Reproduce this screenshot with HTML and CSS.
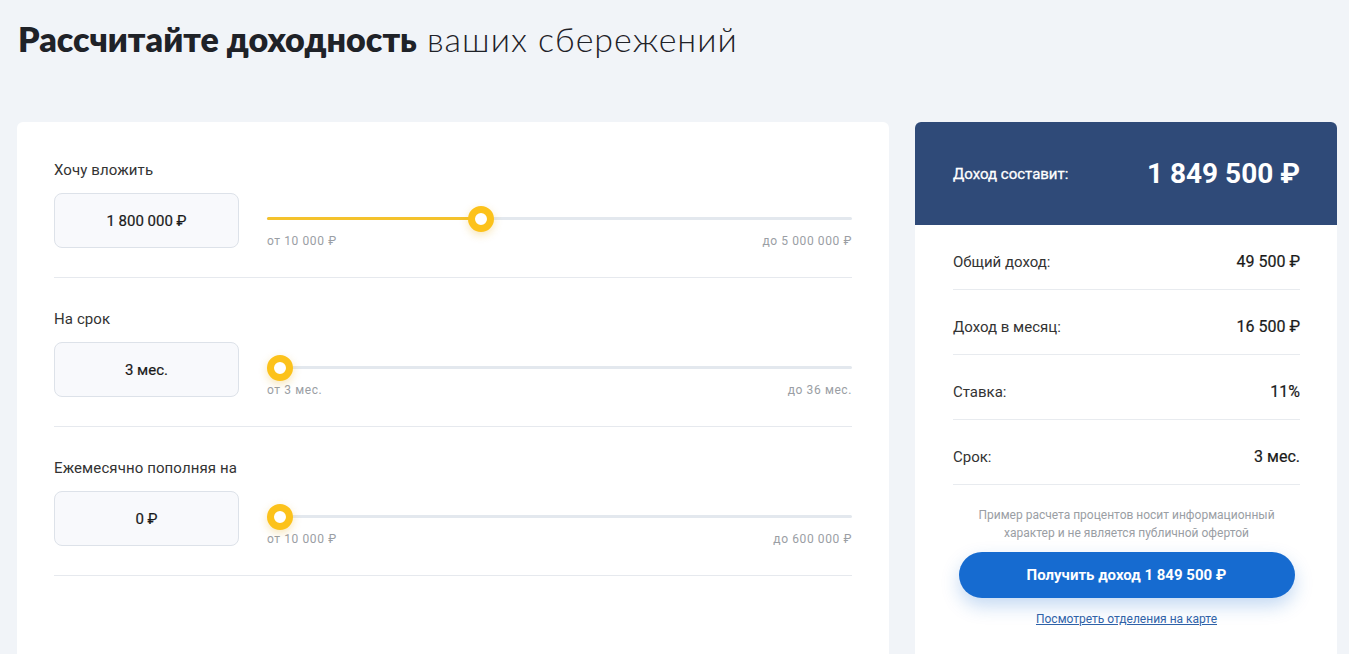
FILE: index.html
```html
<!doctype html>
<html lang="ru">
<head>
	<meta charset="UTF-8">
	<meta name="viewport" content="width=device-width, initial-scale=1.0">
	<title>Калькулятор доходности</title>
	<link rel="stylesheet" href="styles.css">
</head>
<body>
<div class="page">
	<h1 class="title"><b>Рассчитайте доходность</b> ваших сбережений</h1>
	<div class="layout">
		<div class="calc">
			<div class="field">
				<p class="field-name">Хочу вложить</p>
				<div class="field-row">
					<div class="value">1 800 000 ₽</div>
					<div class="range">
						<div class="track">
							<div class="fill" style="width: 36.6%"></div>
							<div class="thumb" style="left: calc(35.87% - 9.3px)"></div>
						</div>
						<div class="limits"><span>от 10 000 ₽</span><span>до 5 000 000 ₽</span></div>
					</div>
				</div>
			</div>
			<div class="field">
				<p class="field-name">На срок</p>
				<div class="field-row">
					<div class="value">3 мес.</div>
					<div class="range">
						<div class="track">
							<div class="thumb" style="left: 0"></div>
						</div>
						<div class="limits"><span>от 3 мес.</span><span>до 36 мес.</span></div>
					</div>
				</div>
			</div>
			<div class="field">
				<p class="field-name">Ежемесячно пополняя на</p>
				<div class="field-row">
					<div class="value">0 ₽</div>
					<div class="range">
						<div class="track">
							<div class="thumb" style="left: 0"></div>
						</div>
						<div class="limits"><span>от 10 000 ₽</span><span>до 600 000 ₽</span></div>
					</div>
				</div>
			</div>
		</div>
		<div class="result">
			<div class="result-head">
				<span class="result-label">Доход составит:</span>
				<span class="result-sum">1 849 500 ₽</span>
			</div>
			<div class="result-body">
				<div class="line"><span>Общий доход:</span><b>49 500 ₽</b></div>
				<div class="line"><span>Доход в месяц:</span><b>16 500 ₽</b></div>
				<div class="line"><span>Ставка:</span><b>11%</b></div>
				<div class="line"><span>Срок:</span><b>3 мес.</b></div>
				<p class="note">Пример расчета процентов носит информационный характер и не является публичной офертой</p>
				<button class="btn">Получить доход 1 849 500 ₽</button>
				<a class="map-link" href="#">Посмотреть отделения на карте</a>
			</div>
		</div>
	</div>
</div>
</body>
</html>
```

FILE: styles.css
```css
	*{
		box-sizing: border-box;
	}
	body{
		margin: 0;
		background-color: #f1f4f8;
		font-family: Roboto, "Liberation Sans", sans-serif;
		color: #222;
		overflow: hidden;
	}
	.page{
		padding: 0 12px 0 17px;
	}
	.title{
		margin: 0;
		padding: 17px 0 0 1px;
		height: 122px;
		font-family: Lato, "Open Sans", sans-serif;
		font-size: 34px;
		line-height: 44px;
		font-weight: 300;
		color: #1f2228;
		letter-spacing: 1px;
	}
	.title b{
		font-weight: 800;
		letter-spacing: 0;
	}
	.layout{
		display: grid;
		grid-template-columns: 872px 422px;
		column-gap: 26px;
		align-items: start;
	}
	.calc{
		background-color: #fff;
		border-radius: 6px;
		padding: 7px 37px 0 37px;
		height: 560px;
	}
	.field{
		padding: 31px 0 29px 0;
		border-bottom: 1px solid #e6e9ee;
	}
	.field-name{
		margin: 0 0 13px 0;
		font-size: 15px;
		line-height: 20px;
		letter-spacing: 0.1px;
		color: #333;
	}
	.field-row{
		display: flex;
		gap: 28px;
	}
	.value{
		width: 185px;
		height: 55px;
		flex-shrink: 0;
		display: flex;
		justify-content: center;
		align-items: center;
		background-color: #f8f9fc;
		border: 1px solid #dde2e9;
		border-radius: 8px;
		font-size: 15px;
		color: #1a1a1a;
		-webkit-text-stroke: 0.2px #1a1a1a;
	}
	.range{
		flex: 1;
		padding-top: 24px;
	}
	.track{
		position: relative;
		height: 3px;
		background-color: #e3e8ee;
		border-radius: 2px;
	}
	.fill{
		height: 3px;
		background-color: #f4c22c;
		border-radius: 2px;
	}
	.thumb{
		position: absolute;
		top: -11px;
		width: 26px;
		height: 26px;
		border-radius: 50%;
		border: 7px solid #fcc21b;
		background-color: #fff;
		box-shadow: 0 3px 8px rgba(230, 170, 20, 0.3);
	}
	.limits{
		display: flex;
		justify-content: space-between;
		margin-top: 14px;
		font-size: 12px;
		line-height: 14px;
		letter-spacing: 0.6px;
		color: #9a9ea4;
	}
	.result{
		background-color: #fff;
		border-radius: 6px;
		overflow: hidden;
		height: 560px;
	}
	.result-head{
		height: 103px;
		background-color: #2f4a78;
		color: #fff;
		display: flex;
		justify-content: space-between;
		align-items: center;
		padding: 0 37px 0 38px;
	}
	.result-label{
		font-size: 15px;
		-webkit-text-stroke: 0.3px #fff;
	}
	.result-sum{
		font-size: 28px;
		font-weight: 700;
	}
	.result-body{
		padding: 0 37px 0 38px;
		display: flex;
		flex-direction: column;
		align-items: center;
	}
	.line{
		width: 100%;
		display: flex;
		justify-content: space-between;
		padding: 28px 0 18px 0;
		line-height: 18px;
		border-bottom: 1px solid #e8ebef;
		font-size: 15px;
		color: #333;
	}
	.line b{
		font-size: 16px;
		font-weight: 400;
		color: #1a1a1a;
		-webkit-text-stroke: 0.2px #1a1a1a;
	}
	.note{
		margin: 21px 0 0 0;
		width: 320px;
		text-align: center;
		font-size: 12px;
		line-height: 18px;
		color: #9a9ea4;
	}
	.btn{
		margin-top: 10px;
		width: 336px;
		height: 46px;
		border: none;
		border-radius: 23px;
		background-color: #166bd0;
		color: #fff;
		font-family: Roboto, "Liberation Sans", sans-serif;
		font-size: 15px;
		font-weight: 700;
		box-shadow: 0 8px 18px rgba(22, 107, 208, 0.25);
		cursor: pointer;
	}
	.map-link{
		margin-top: 13px;
		font-size: 12px;
		line-height: 16px;
		color: #2f62a8;
	}
```
